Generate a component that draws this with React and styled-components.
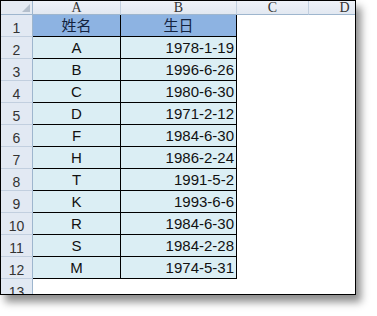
import React from 'react';
import styled, { createGlobalStyle } from 'styled-components';

const GlobalStyle = createGlobalStyle`
    html, body {
        margin: 0;
        padding: 0;
        background: #ffffff;
    }
`;

const Page = styled.div`
    width: 377px;
    height: 316px;
    background: #ffffff;
`;

const Sheet = styled.div`
    box-sizing: border-box;
    width: 356px;
    height: 295px;
    border: 1px solid #000000;
    background: #ffffff;
    overflow: hidden;
    box-shadow: 5px 7px 8px rgba(0, 0, 0, 0.45);
`;

const Grid = styled.div`
    display: grid;
    grid-template-columns: 32px 88px 116px 72px 72px;
    grid-template-rows: 14px repeat(13, 22px);
`;

const Corner = styled.div`
    position: relative;
    box-sizing: border-box;
    background: #e4eaf2;
    border-right: 1px solid #9eb6ce;
    border-bottom: 1px solid #9eb6ce;

    &::after {
        content: '';
        position: absolute;
        right: 2px;
        bottom: 2px;
        width: 0;
        height: 0;
        border-left: 8px solid transparent;
        border-bottom: 8px solid #b4bfcc;
    }
`;

const ColHead = styled.div`
    box-sizing: border-box;
    display: flex;
    align-items: center;
    justify-content: center;
    background: linear-gradient(#eef2f8, #e2e8f1);
    border-right: 1px solid #c2cfdf;
    border-bottom: 1px solid #9eb6ce;
    font-family: 'Liberation Serif', serif;
    font-size: 14px;
    line-height: 1;
    color: #333333;
`;

const RowHead = styled.div`
    box-sizing: border-box;
    display: flex;
    align-items: flex-end;
    justify-content: center;
    padding-bottom: 1px;
    background: #e2e9f3;
    border-right: 1px solid #9eb6ce;
    border-bottom: 1px solid #c2cfdf;
    font-family: 'Liberation Sans', sans-serif;
    font-size: 14px;
    line-height: 1;
    color: #333333;
`;

const tones = {
    title: '#8db3e2',
    data: '#dbeef4',
    empty: '#ffffff',
};

const Cell = styled.div`
    box-sizing: border-box;
    display: flex;
    align-items: flex-end;
    justify-content: ${props => (props.$align === 'right' ? 'flex-end' : 'center')};
    padding: 0 2px 3px 2px;
    background: ${props => tones[props.$tone]};
    border-right: ${props => (props.$tone === 'empty' ? 'none' : '1px solid #000000')};
    border-bottom: ${props => (props.$tone === 'empty' ? 'none' : '1px solid #000000')};
    font-family: 'Liberation Sans', 'Noto Sans CJK SC', sans-serif;
    font-size: 15px;
    line-height: 1;
    color: ${props => (props.$tone === 'title' ? '#14233f' : '#111111')};
    white-space: nowrap;
`;

const people = [
    ['A', '1978-1-19'],
    ['B', '1996-6-26'],
    ['C', '1980-6-30'],
    ['D', '1971-2-12'],
    ['F', '1984-6-30'],
    ['H', '1986-2-24'],
    ['T', '1991-5-2'],
    ['K', '1993-6-6'],
    ['R', '1984-6-30'],
    ['S', '1984-2-28'],
    ['M', '1974-5-31'],
];

const App = () => (
    <Page>
        <GlobalStyle />
        <Sheet>
            <Grid>
                <Corner />
                {['A', 'B', 'C', 'D'].map(c => (
                    <ColHead key={c}>{c}</ColHead>
                ))}

                <RowHead>1</RowHead>
                <Cell $tone="title">姓名</Cell>
                <Cell $tone="title">生日</Cell>
                <Cell $tone="empty" />
                <Cell $tone="empty" />

                {people.map(([name, date], i) => (
                    <React.Fragment key={name}>
                        <RowHead>{i + 2}</RowHead>
                        <Cell $tone="data">{name}</Cell>
                        <Cell $tone="data" $align="right">{date}</Cell>
                        <Cell $tone="empty" />
                        <Cell $tone="empty" />
                    </React.Fragment>
                ))}

                <RowHead>13</RowHead>
                <Cell $tone="empty" />
                <Cell $tone="empty" />
                <Cell $tone="empty" />
                <Cell $tone="empty" />
            </Grid>
        </Sheet>
    </Page>
);

export default App;
